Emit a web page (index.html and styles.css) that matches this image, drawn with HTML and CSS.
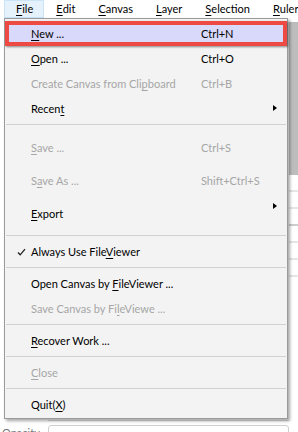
FILE: index.html
```html
<!DOCTYPE html>
<html lang="en">
<head>
  <meta charset="UTF-8" />
  <title>File menu</title>
  <link rel="stylesheet" href="styles.css">
</head>
<body>

  <div class="window">
    <div class="menubar">
      <span class="bar-item open"><u>F</u>ile</span>
      <span class="bar-item"><u>E</u>dit</span>
      <span class="bar-item"><u>C</u>anvas</span>
      <span class="bar-item"><u>L</u>ayer</span>
      <span class="bar-item"><u>S</u>election</span>
      <span class="bar-item"><u>R</u>uler</span>
    </div>

    <div class="workspace">
      <div class="main">
        <div class="props">
          <div class="prop-line"></div>
          <div class="prop-row">
            <span class="prop-label">Opacity</span>
            <span class="prop-input"></span>
          </div>
        </div>
      </div>
      <div class="side">
        <div class="thumb"></div>
        <div class="side-row"></div>
        <div class="side-row"></div>
        <div class="side-row dark"></div>
        <div class="side-row"></div>
        <div class="side-row"></div>
        <div class="side-row"></div>
      </div>
    </div>

    <div class="menu">
      <div class="item active">
        <span class="label"><u>N</u>ew ...</span>
        <span class="key">Ctrl+N</span>
      </div>
      <div class="item">
        <span class="label"><u>O</u>pen ...</span>
        <span class="key">Ctrl+O</span>
      </div>
      <div class="item disabled">
        <span class="label">Create Canvas from Cli<u>p</u>board</span>
        <span class="key">Ctrl+B</span>
      </div>
      <div class="item">
        <span class="label">Recen<u>t</u></span>
        <span class="arrow"></span>
      </div>
      <div class="sep"></div>
      <div class="item disabled tall">
        <span class="label"><u>S</u>ave ...</span>
        <span class="key">Ctrl+S</span>
      </div>
      <div class="item disabled short">
        <span class="label">S<u>a</u>ve As ...</span>
        <span class="key">Shift+Ctrl+S</span>
      </div>
      <div class="item tall">
        <span class="label"><u>E</u>xport</span>
        <span class="arrow"></span>
      </div>
      <div class="sep"></div>
      <div class="item">
        <span class="check">
          <svg width="9" height="8" viewBox="0 0 9 8"><path d="M1 4.5 L3.2 6.8 L8 1.2" fill="none" stroke="#222" stroke-width="1.3"/></svg>
        </span>
        <span class="label">Always Use File<u>V</u>iewer</span>
      </div>
      <div class="sep"></div>
      <div class="item">
        <span class="label">Open Canvas by <u>F</u>ileViewer ...</span>
      </div>
      <div class="item disabled">
        <span class="label">Save Canvas by Fi<u>l</u>eViewe ...</span>
      </div>
      <div class="sep"></div>
      <div class="item">
        <span class="label"><u>R</u>ecover Work ...</span>
      </div>
      <div class="sep"></div>
      <div class="item disabled">
        <span class="label"><u>C</u>lose</span>
      </div>
      <div class="sep"></div>
      <div class="item">
        <span class="label">Quit(<u>X</u>)</span>
      </div>
    </div>
  </div>

</body>
</html>
```

FILE: styles.css
```css
* {
  box-sizing: border-box;
}

body {
  margin: 0;
  font-family: "Segoe UI", Lato, "Noto Sans", sans-serif;
  font-size: 11px;
  color: #000;
  background: #fff;
}

.window {
  position: relative;
  width: 298px;
  height: 432px;
  overflow: hidden;
  background: #fff;
}

u {
  text-decoration-thickness: 1px;
  text-underline-offset: 2px;
}

/* menu bar */
.menubar {
  display: flex;
  height: 19px;
  padding-left: 4px;
  background: #fff;
}

.bar-item {
  display: flex;
  align-items: center;
  padding: 0 10px 1px 11px;
  border: 1px solid transparent;
  height: 18px;
}

.bar-item.open {
  background: #e5f1fb;
  border-color: #cce4f7;
}

/* content behind the menu */
.workspace {
  display: grid;
  grid-template-columns: 1fr 9px;
  height: 413px;
}

.main {
  display: flex;
  flex-direction: column;
  justify-content: flex-end;
}

.prop-line {
  height: 1px;
  margin-left: 48px;
  background: #dcdcdc;
  margin-bottom: 4px;
}

.prop-row {
  display: flex;
  align-items: flex-start;
  gap: 10px;
  height: 7px;
  padding-left: 2px;
}

.prop-label {
  color: #777;
  line-height: 12px;
  margin-top: 2px;
  width: 36px;
}

.prop-input {
  flex: 1;
  height: 20px;
  border: 1px solid #cfcfcf;
  border-radius: 3px;
}

.side {
  display: flex;
  flex-direction: column;
  background: #fff;
}

.thumb {
  height: 153px;
  margin-top: 3px;
  background: #bdbdbd;
}

.side-row {
  height: 17px;
  border-bottom: 2px solid #e6e6e6;
}

.side-row.dark {
  border-bottom-color: #cdcdcd;
}

/* dropdown */
.menu {
  position: absolute;
  left: 4px;
  top: 18px;
  width: 284px;
  padding: 2px 0 1px;
  background: #f3f3f3;
  border: 1px solid #9a9a9a;
  box-shadow: 2px 2px 3px rgba(0, 0, 0, 0.35);
}

.item {
  display: flex;
  align-items: center;
  position: relative;
  height: 25px;
  padding-left: 26px;
}

.item.tall {
  height: 38px;
}

.item.short {
  height: 28px;
}

.item.disabled {
  color: #a6a6a6;
}

.item.active {
  border: 4px solid #ec4a42;
  background: #d9d9fb;
  padding-left: 22px;
  box-shadow: 1px 1px 2px rgba(0, 0, 0, 0.45);
}

.item.active .key {
  left: 192px;
}

.label {
  white-space: nowrap;
}

.key {
  position: absolute;
  left: 196px;
}

.check {
  position: absolute;
  left: 12px;
  top: 9px;
  line-height: 0;
}

.arrow {
  position: absolute;
  left: 268px;
  top: 9px;
  width: 0;
  height: 0;
  border-top: 3.5px solid transparent;
  border-bottom: 3.5px solid transparent;
  border-left: 4px solid #000;
}

.sep {
  height: 7px;
  padding: 3px 1px;
}

.sep::before {
  content: "";
  display: block;
  height: 1px;
  background: #d2d2d2;
}
```
